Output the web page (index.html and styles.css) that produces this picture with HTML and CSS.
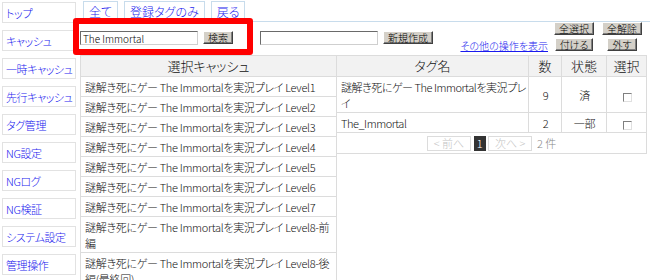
FILE: index.html
```html
<!DOCTYPE html>
<html lang="ja">
<head>
    <meta charset="UTF-8">
    <title>タグ管理</title>
    <link rel="stylesheet" href="styles.css">
</head>
<body>
<div class="page">
    <nav class="side">
        <a class="side-item" href="#">トップ</a>
        <a class="side-item" href="#">キャッシュ</a>
        <a class="side-item" href="#">一時キャッシュ</a>
        <a class="side-item" href="#">先行キャッシュ</a>
        <a class="side-item" href="#">タグ管理</a>
        <a class="side-item" href="#">NG設定</a>
        <a class="side-item" href="#">NGログ</a>
        <a class="side-item" href="#">NG検証</a>
        <a class="side-item" href="#">システム設定</a>
        <a class="side-item" href="#">管理操作</a>
    </nav>

    <div class="main">
        <div class="tabs">
            <a class="tab" href="#">全て</a>
            <a class="tab" href="#">登録タグのみ</a>
            <a class="tab" href="#">戻る</a>
        </div>

        <div class="toolbar">
            <div class="search">
                <input class="field" type="text" value="The Immortal">
                <button class="btn">検索</button>
            </div>
            <div class="create">
                <input class="field" type="text">
                <button class="btn">新規作成</button>
            </div>
            <div class="ops">
                <button class="btn op-all">全選択</button>
                <button class="btn op-none">全解除</button>
                <a class="more" href="#">その他の操作を表示</a>
                <button class="btn">付ける</button>
                <button class="btn">外す</button>
            </div>
        </div>

        <div class="lists">
            <table class="cache-table">
                <tr><th>選択キャッシュ</th></tr>
                <tr><td>謎解き死にゲー The Immortalを実況プレイ Level1</td></tr>
                <tr><td>謎解き死にゲー The Immortalを実況プレイ Level2</td></tr>
                <tr><td>謎解き死にゲー The Immortalを実況プレイ Level3</td></tr>
                <tr><td>謎解き死にゲー The Immortalを実況プレイ Level4</td></tr>
                <tr><td>謎解き死にゲー The Immortalを実況プレイ Level5</td></tr>
                <tr><td>謎解き死にゲー The Immortalを実況プレイ Level6</td></tr>
                <tr><td>謎解き死にゲー The Immortalを実況プレイ Level7</td></tr>
                <tr><td>謎解き死にゲー The Immortalを実況プレイ Level8-前編</td></tr>
                <tr><td>謎解き死にゲー The Immortalを実況プレイ Level8-後編(最終回)</td></tr>
            </table>

            <table class="tag-table">
                <tr>
                    <th class="col-name">タグ名</th>
                    <th class="col-num">数</th>
                    <th class="col-state">状態</th>
                    <th class="col-sel">選択</th>
                </tr>
                <tr>
                    <td class="tag-name">謎解き死にゲー The Immortalを実況プレイ</td>
                    <td class="center">9</td>
                    <td class="center">済</td>
                    <td class="center"><span class="chk"></span></td>
                </tr>
                <tr>
                    <td class="tag-name">The_Immortal</td>
                    <td class="center">2</td>
                    <td class="center">一部</td>
                    <td class="center"><span class="chk"></span></td>
                </tr>
                <tr>
                    <td class="pager" colspan="4">
                        <span class="pg-off">&lt; 前へ</span>
                        <span class="pg-cur">1</span>
                        <span class="pg-off">次へ &gt;</span>
                        <span class="pg-count">2 件</span>
                    </td>
                </tr>
            </table>
        </div>
    </div>

    <div class="mark"></div>
</div>
</body>
</html>
```

FILE: styles.css
```css
body {
    margin: 0;
    font-family: "Noto Sans CJK JP", sans-serif;
    font-feature-settings: "palt";
    font-weight: 300;
    font-size: 11px;
    color: #111;
    background: #fff;
}
.page {
    display: flex;
    position: relative;
    height: 280px;
    overflow: hidden;
}
.side {
    width: 74px;
    padding: 2px 4px 0 2px;
    display: flex;
    flex-direction: column;
    gap: 7px;
    flex-shrink: 0;
}
.side-item {
    height: 21px;
    box-sizing: border-box;
    border: 1px solid #e2e2e2;
    display: flex;
    align-items: center;
    padding-left: 3px;
    color: #1a1aee;
    font-size: 11px;
    letter-spacing: -0.4px;
    text-decoration: none;
    white-space: nowrap;
    overflow: hidden;
}
.main {
    flex: 1;
    min-width: 0;
}
.tabs {
    display: flex;
    gap: 6px;
    padding: 1px 0 0 3px;
    height: 20px;
    border-bottom: 1px solid #c8dcec;
}
.tab {
    height: 20px;
    box-sizing: border-box;
    border: 1px solid #c8dcec;
    border-bottom: none;
    padding: 0 5px;
    display: flex;
    align-items: center;
    color: #1a1aee;
    font-size: 12px;
    text-decoration: none;
}
.toolbar {
    height: 33px;
    display: flex;
    align-items: flex-start;
}
.search,
.create {
    display: flex;
    gap: 5px;
    padding-top: 9px;
}
.create {
    margin-left: 27px;
}
.field {
    width: 118px;
    height: 14px;
    box-sizing: border-box;
    margin: 0;
    padding: 0 2px;
    border: 1px solid;
    border-color: #6a6a6a #cfcfcf #cfcfcf #6a6a6a;
    font-family: inherit;
    font-weight: 300;
    font-size: 10px;
    color: #000;
}
.btn {
    height: 13px;
    margin: 0;
    padding: 0 4px;
    background: #d4d0c8;
    border: 1px solid;
    border-color: #fff #404040 #404040 #fff;
    box-shadow: inset -1px -1px #808080;
    font-family: inherit;
    font-feature-settings: "palt";
    font-weight: 300;
    font-size: 10px;
    line-height: 10px;
    color: #000;
}
.ops {
    margin-left: auto;
    margin-right: 6px;
    display: grid;
    grid-template-columns: auto 44px 44px;
    column-gap: 4px;
    row-gap: 3px;
    justify-items: center;
    align-items: end;
}
.op-all {
    grid-column: 2;
}
.more {
    font-size: 10px;
    color: #1a1aee;
    text-decoration: underline;
    line-height: 11px;
    justify-self: end;
}
.lists {
    display: flex;
    align-items: flex-start;
}
table {
    border-collapse: collapse;
}
th,
td {
    border: 1px solid #dcdcdc;
}
th {
    background: #f2f2f2;
    font-weight: 300;
    font-size: 13px;
    line-height: 17px;
    padding: 1px 3px 2px;
}
td {
    padding: 2px 3px 1px 4px;
    line-height: 16px;
    letter-spacing: -0.3px;
    vertical-align: middle;
}
.tag-name {
    padding-right: 1px;
    letter-spacing: -0.45px;
}
.cache-table {
    width: 257px;
}
.tag-table {
    width: 311px;
    margin-left: -1px;
}
.col-num {
    width: 26px;
}
.col-state {
    width: 38px;
}
.col-sel {
    width: 33px;
}
.center {
    text-align: center;
}
.chk {
    display: inline-block;
    width: 9px;
    height: 9px;
    box-sizing: border-box;
    border: 1px solid;
    border-color: #808080 #e0e0e0 #e0e0e0 #808080;
    background: #fff;
    vertical-align: middle;
}
.pager {
    text-align: center;
    letter-spacing: 0;
    padding: 2px 3px 2px;
}
.pg-off {
    display: inline-block;
    border: 1px solid #dcdcdc;
    color: #c4c4c4;
    padding: 0 6px;
    line-height: 13px;
}
.pg-cur {
    display: inline-block;
    background: #333;
    color: #fff;
    padding: 0 3px;
    line-height: 15px;
}
.pg-count {
    color: #888;
    margin-left: 2px;
}
.mark {
    position: absolute;
    left: 73px;
    top: 18px;
    width: 180px;
    height: 37px;
    box-sizing: border-box;
    border: 6px solid #f00;
    border-radius: 3px;
    pointer-events: none;
}
```
